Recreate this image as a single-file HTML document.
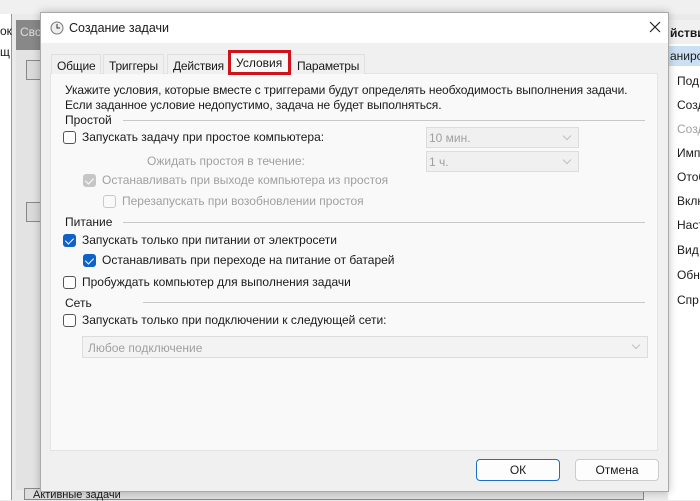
<!DOCTYPE html><html><head><meta charset="utf-8"><style>
*{box-sizing:border-box;margin:0;padding:0}
body{width:700px;height:500px;overflow:hidden;background:#eaeaea;font-family:"Liberation Sans","DejaVu Sans",sans-serif;font-size:12px;color:#1a1a1a;position:relative}
.a{position:absolute;white-space:nowrap}
.cb{position:absolute;width:13px;height:13px;border:1px solid #555;border-radius:3px;background:#fff}
.cb.on{background:#0f62c6;border-color:#0f62c6}
.cb.on:after{content:"";position:absolute;left:3px;top:1px;width:4px;height:7px;border:solid #fff;border-width:0 1.5px 1.5px 0;transform:rotate(45deg)}
.cb.dis{border-color:#c8c8c8;background:#f9f9f9}
.cb.dison{background:#c6c6c6;border-color:#c6c6c6}
.cb.dison:after{content:"";position:absolute;left:3px;top:1px;width:4px;height:7px;border:solid #fff;border-width:0 1.5px 1.5px 0;transform:rotate(45deg)}
.g{color:#a0a0a0}
.dd{position:absolute;background:#f0f0f0;border:1px solid #dcdcdc;color:#a0a0a0;padding:3px 2px}
.dd:after{content:"";position:absolute;right:8px;top:5px;width:5px;height:5px;border:solid #c0c0c0;border-width:0 1px 1px 0;transform:rotate(45deg)}
.hl{position:absolute;height:1px;background:#c8c8c8}
.tab{position:absolute;top:54px;height:20px;padding:4px 5px;background:#f0f0f0;border:1px solid #e0e0e0;border-bottom:none;letter-spacing:-0.2px}
.ri{position:absolute;left:677px}
</style></head><body>
<div class="a" style="left:0;top:0;width:700px;height:14px;background:#f0f0f0"></div>
<div class="a" style="left:0;top:14px;width:12px;height:486px;background:#fff;border-right:1px solid #999"></div>
<div class="a" style="left:0;top:24px">ок</div><div class="a" style="left:0;top:45px">щ</div>
<div class="a" style="left:16px;top:20px;width:30px;height:30px;background:#888;color:#ddd;padding:5px 4px">Сво</div>
<div class="a" style="left:16px;top:50px;width:28px;height:440px;background:#e3e3e3"></div>
<div class="a" style="left:26px;top:60px;width:18px;height:20px;background:#dadada;border:1px solid #888"></div>
<div class="a" style="left:26px;top:202px;width:18px;height:20px;background:#dadada;border:1px solid #888"></div>
<div class="a" style="left:24px;top:488px;width:620px;height:12px;background:#ddd;border:1px solid #888;padding-left:8px;font-size:11px;line-height:12px">Активные задачи</div>
<div class="a" style="left:668px;top:20px;width:32px;height:480px;background:#fff"></div>
<div class="a" style="left:668px;top:20px;width:32px;height:24px;background:#f0f0f0;font-weight:bold;padding:6px 2px">йстви</div>
<div class="a" style="left:668px;top:46px;width:32px;height:20px;background:#cce0f5;padding:3px 2px">анирс</div>
<div class="ri" style="top:74px">Под</div><div class="ri" style="top:98px">Созд</div><div class="ri g" style="top:122px">Созд</div><div class="ri" style="top:146px">Имп</div><div class="ri" style="top:170px">Отоб</div><div class="ri" style="top:194px">Вклн</div><div class="ri" style="top:218px">Наст</div><div class="ri" style="top:243px">Вид</div><div class="ri" style="top:268px">Обн</div><div class="ri" style="top:293px">Спр</div>

<div class="a" style="left:40px;top:12px;width:629px;height:480px;background:#f0f0f0;border:1px solid #aaa;box-shadow:0 0 8px rgba(0,0,0,.25)"></div>
<div class="a" style="left:41px;top:13px;width:627px;height:30px;background:#fff"></div>
<svg class="a" style="left:50px;top:21px" width="14" height="14"><circle cx="7" cy="7" r="6" fill="#eee" stroke="#777"/><path d="M7 3v4h3" stroke="#333" fill="none"/></svg>
<div class="a" style="left:69px;top:21px;font-size:12.5px">Создание задачи</div>
<svg class="a" style="left:649px;top:21px" width="12" height="12"><path d="M1 1L11 11M11 1L1 11" stroke="#222" stroke-width="1.2"/></svg>

<div class="a" style="left:50px;top:73px;width:608px;height:378px;background:#f9f9f9;border:1px solid #e4e4e4"></div>
<div class="tab" style="left:51px">Общие</div>
<div class="tab" style="left:103px">Триггеры</div>
<div class="tab" style="left:167px">Действия</div>
<div class="tab" style="left:291px">Параметры</div>
<div class="a" style="left:228px;top:50px;width:63px;height:25px;border:3px solid #d0121b;background:#f9f9f9;padding:3px 5px">Условия</div>

<div class="a" style="left:65px;top:83px;line-height:15px;letter-spacing:-0.1px">Укажите условия, которые вместе с триггерами будут определять необходимость выполнения задачи.<br>Если заданное условие недопустимо, задача не будет выполняться.</div>
<div class="a" style="left:65px;top:113px">Простой</div><div class="hl" style="left:123px;top:120px;width:522px"></div>
<div class="cb" style="left:63px;top:131px"></div><div class="a" style="left:82px;top:130px">Запускать задачу при простое компьютера:</div>
<div class="dd" style="left:426px;top:127px;width:153px;height:21px">10 мин.</div>
<div class="a g" style="left:147px;top:154px">Ожидать простоя в течение:</div>
<div class="dd" style="left:426px;top:151px;width:153px;height:21px">1 ч.</div>
<div class="cb dison" style="left:83px;top:174px"></div><div class="a g" style="left:102px;top:173px">Останавливать при выходе компьютера из простоя</div>
<div class="cb dis" style="left:103px;top:195px"></div><div class="a g" style="left:122px;top:194px">Перезапускать при возобновлении простоя</div>
<div class="a" style="left:65px;top:215px">Питание</div><div class="hl" style="left:123px;top:222px;width:522px"></div>
<div class="cb on" style="left:63px;top:234px"></div><div class="a" style="left:82px;top:233px">Запускать только при питании от электросети</div>
<div class="cb on" style="left:83px;top:254px"></div><div class="a" style="left:102px;top:253px">Останавливать при переходе на питание от батарей</div>
<div class="cb" style="left:63px;top:276px"></div><div class="a" style="left:82px;top:275px">Пробуждать компьютер для выполнения задачи</div>
<div class="a" style="left:65px;top:296px">Сеть</div><div class="hl" style="left:143px;top:302px;width:502px"></div>
<div class="cb" style="left:63px;top:314px"></div><div class="a" style="left:82px;top:313px">Запускать только при подключении к следующей сети:</div>
<div class="dd" style="left:82px;top:336px;width:566px;height:22px;background:#f3f3f3;padding:4px 5px">Любое подключение</div>

<div class="a" style="left:476px;top:459px;width:84px;height:22px;background:#fdfdfd;border:1px solid #1f6fc4;border-radius:4px;text-align:center;line-height:20px">ОК</div>
<div class="a" style="left:575px;top:459px;width:84px;height:22px;background:#fdfdfd;border:1px solid #ccc;border-radius:4px;text-align:center;line-height:20px">Отмена</div>
</body></html>
